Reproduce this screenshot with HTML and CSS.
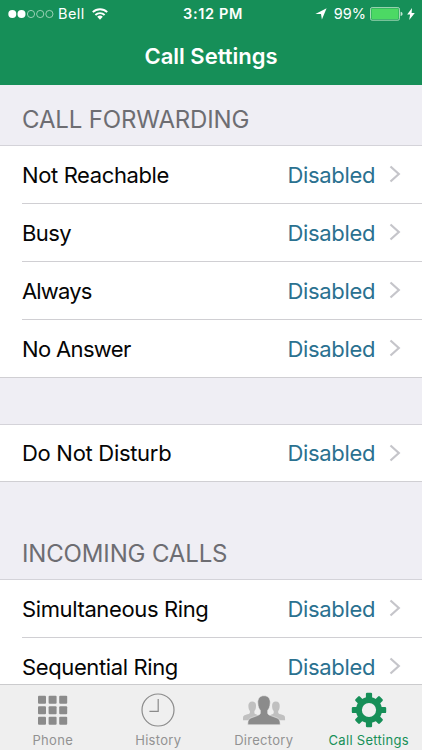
FILE: index.html
```html
<!DOCTYPE html>
<html lang="en">
<head>
<meta charset="utf-8">
<title>Call Settings</title>
<link rel="stylesheet" href="styles.css">
</head>
<body>
<div class="screen">
  <header class="top">
    <div class="status">
      <div class="status-left">
        <svg class="signal" width="46" height="10" viewBox="0 0 46 10"><g fill="#fff"><circle cx="4.3" cy="5" r="4"/><circle cx="13.5" cy="5" r="4"/></g><g fill="none" stroke="#b9dfcb" stroke-width=".8"><circle cx="23" cy="5" r="3.6"/><circle cx="32.2" cy="5" r="3.6"/><circle cx="41.4" cy="5" r="3.6"/></g></svg>
        <span class="carrier">Bell</span>
        <svg class="wifi" width="16" height="12" viewBox="0 0 16 12"><g fill="none" stroke="#fff" stroke-width="1.9"><path d="M.8 4.2a10.2 10.2 0 0 1 14.4 0"/><path d="M3.4 7a6.5 6.5 0 0 1 9.2 0"/></g><path d="M5.2 8.8a4 4 0 0 1 5.6 0L8 11.7z" fill="#fff"/></svg>
      </div>
      <span class="time">3:12 PM</span>
      <div class="status-right">
        <svg class="location" width="12" height="12" viewBox="0 0 12 12"><path d="M11.6.3 6.9 11.5 6 6H.4z" fill="#fff"/></svg>
        <span class="percent">99%</span>
        <svg class="battery" width="33" height="14" viewBox="0 0 33 14"><rect x=".5" y=".6" width="29" height="12.6" rx="1.6" fill="none" stroke="#a5dab8"/><rect x="1.4" y="1.5" width="27.2" height="10.8" rx=".8" fill="#4cd964"/><path d="M30.6 4.8c2.6.3 2.6 4 0 4.2z" fill="#c3e5d2"/></svg>
        <svg class="bolt" width="8" height="12" viewBox="0 0 8 12"><path d="M5 0 .2 6.6h2.9L2.2 12l5.600-7H4.600z" fill="#fff"/></svg>
      </div>
    </div>
    <h1 class="title">Call Settings</h1>
  </header>
  <main class="content">
    <h2 class="group-title forwarding">CALL FORWARDING</h2>
    <ul class="group">
      <li class="row"><span class="label reachable">Not Reachable</span><span class="value">Disabled</span><svg class="chevron" width="12" height="18" viewBox="0 0 12 18"><path d="M1.500 1.500 9.800 9l-8.300 7.500"/></svg></li>
      <li class="row"><span class="label busy">Busy</span><span class="value">Disabled</span><svg class="chevron" width="12" height="18" viewBox="0 0 12 18"><path d="M1.5 1.5 9.8 9l-8.3 7.5"/></svg></li>
      <li class="row"><span class="label always">Always</span><span class="value">Disabled</span><svg class="chevron" width="12" height="18" viewBox="0 0 12 18"><path d="M1.5 1.5 9.8 9l-8.3 7.5"/></svg></li>
      <li class="row"><span class="label answer">No Answer</span><span class="value">Disabled</span><svg class="chevron" width="12" height="18" viewBox="0 0 12 18"><path d="M1.5 1.5 9.8 9l-8.3 7.5"/></svg></li>
    </ul>
    <ul class="group separate">
      <li class="row"><span class="label disturb">Do Not Disturb</span><span class="value">Disabled</span><svg class="chevron" width="12" height="18" viewBox="0 0 12 18"><path d="M1.5 1.5 9.8 9l-8.3 7.5"/></svg></li>
    </ul>
    <h2 class="group-title incoming">INCOMING CALLS</h2>
    <ul class="group">
      <li class="row"><span class="label simultaneous">Simultaneous Ring</span><span class="value">Disabled</span><svg class="chevron" width="12" height="18" viewBox="0 0 12 18"><path d="M1.5 1.5 9.8 9l-8.3 7.5"/></svg></li>
      <li class="row"><span class="label sequential">Sequential Ring</span><span class="value">Disabled</span><svg class="chevron" width="12" height="18" viewBox="0 0 12 18"><path d="M1.5 1.5 9.8 9l-8.3 7.5"/></svg></li>
    </ul>
  </main>
  <nav class="tabs">
    <a class="tab"><svg width="44" height="36" viewBox="0 0 44 36"><g fill="#8b8b8b"><rect x="7" y="3.8" width="8" height="8" rx="1"/><rect x="17.6" y="3.8" width="8" height="8" rx="1"/><rect x="28.2" y="3.8" width="8" height="8" rx="1"/><rect x="7" y="14.3" width="8" height="8" rx="1"/><rect x="17.6" y="14.3" width="8" height="8" rx="1"/><rect x="28.2" y="14.3" width="8" height="8" rx="1"/><rect x="7" y="24.8" width="8" height="8" rx="1"/><rect x="17.6" y="24.8" width="8" height="8" rx="1"/><rect x="28.2" y="24.8" width="8" height="8" rx="1"/></g></svg><span class="tab-label">Phone</span></a>
    <a class="tab"><svg width="44" height="36" viewBox="0 0 44 36"><g fill="none" stroke="#8b8b8b" stroke-width="1.2"><circle cx="22" cy="18" r="16"/><path d="M22.2 7v12.400h-8.800"/></g></svg><span class="tab-label">History</span></a>
    <a class="tab"><svg width="44" height="36" viewBox="0 0 44 36"><g fill="#c0c0c0"><path d="M10.200 9.500c2.700 0 4 2 3.800 4.700-.1 2.500-.7 3.800-1.600 4.800v2c0 1.500 5.200 1.800 5.200 4v3.200H1c0-3.900.2-4.600 2.300-5.200 3.200-.9 4.600-1 4.600-2.400V19c-.8-1-1.400-2.300-1.500-4.800-.2-2.700 1.200-4.700 3.800-4.700z"/><path d="M33.900 9.500c-2.700 0-4 2-3.800 4.700.1 2.500.7 3.800 1.600 4.800v2c0 1.500-5.200 1.800-5.200 4v3.200h16.600c0-3.900-.2-4.600-2.300-5.200-3.200-.9-4.600-1-4.600-2.400V19c.8-1 1.400-2.300 1.500-4.800.2-2.700-1.200-4.700-3.800-4.700z"/></g><path d="M22 3.700c4.300 0 6.500 3.100 6.200 7.300-.2 3.500-1 5.700-2.500 7.300v2.800c0 1.900 3.100 2.500 6.500 3.800 4.500 1.600 6 1.700 6 7.900H5.800c0-6.200 1.500-6.300 6-7.900 3.400-1.300 6.500-1.900 6.500-3.800v-2.800c-1.500-1.600-2.300-3.800-2.500-7.300-.3-4.200 1.900-7.300 6.200-7.300z" fill="#8b8b8b" stroke="#efefef" stroke-width=".6"/></svg><span class="tab-label">Directory</span></a>
    <a class="tab active"><svg width="44" height="36" viewBox="0 0 44 36"><g fill="#168f58"><rect x="18.9" y=".8" width="6.2" height="34.4" rx="1.2"/><rect x="4.8" y="14.9" width="34.4" height="6.2" rx="1.2"/><rect x="18.9" y=".8" width="6.2" height="34.4" rx="1.2" transform="rotate(45 22 18)"/><rect x="18.9" y=".8" width="6.2" height="34.4" rx="1.2" transform="rotate(-45 22 18)"/><circle cx="22" cy="18" r="13"/></g><circle cx="22" cy="18" r="7.1" fill="#efefef"/></svg><span class="tab-label">Call Settings</span></a>
  </nav>
</div>
</body>
</html>
```
FILE: styles.css
```css
* { box-sizing: border-box; }

body {
  margin: 0;
  font-family: Inter, "Liberation Sans", sans-serif;
  background: #efeef4;
}

.screen {
  display: flex;
  flex-direction: column;
  width: 422px;
  height: 750px;
  overflow: hidden;
}

.top {
  flex: none;
  height: 85px;
  background: #168f58;
  color: #fff;
}

.status {
  display: grid;
  grid-template-columns: 1fr auto 1fr;
  align-items: center;
  height: 28px;
  padding: 0 7px 0 8px;
  font-size: 14px;
  line-height: 28px;
}

.status-left, .status-right { display: flex; align-items: center; }
.status-right { justify-content: flex-end; }
.carrier { width: 34px; margin-left: 4px; font-size: 14.5px; letter-spacing: 0.4px; }
.wifi { margin-top: -1px; }
.time { margin-left: 3px; font-size: 14.5px; font-weight: 600; letter-spacing: 0.65px; }
.percent { margin: 0 4px 0 7px; font-size: 14.5px; }
.bolt { margin-left: 4px; }

.title {
  margin: 0;
  font-size: 22px;
  font-weight: 600;
  line-height: 56px;
  text-align: center;
}

.content {
  flex: 1;
  min-height: 0;
  overflow: hidden;
}

.group-title {
  height: 61px;
  margin: 0;
  padding: 4px 22px 0;
  border-bottom: 1px solid #d4d3d9;
  color: #6d6d72;
  font-size: 24px;
  font-weight: 400;
  line-height: 61px;
  letter-spacing: -0.15px;
}

.incoming { height: 98px; padding-top: 41px; }

.group {
  margin: 0;
  padding: 0;
  list-style: none;
  background: #fff;
}

.separate { margin-top: 46px; border-top: 1px solid #d4d3d9; }
.separate .row { height: 57px; }

.row {
  display: flex;
  align-items: center;
  height: 58px;
  margin-left: 22px;
  padding-right: 21px;
  border-bottom: 1px solid #d0cfd3;
  font-size: 22px;
  line-height: 30px;
}

.row:last-child {
  margin-left: 0;
  padding-left: 22px;
}

.label { flex: 1; color: #050505; letter-spacing: -0.38px; white-space: nowrap; }
.busy { letter-spacing: -0.6px; }
.always { letter-spacing: -0.85px; }
.answer { letter-spacing: -0.65px; }
.disturb { letter-spacing: -0.3px; }
.value { color: #2a7190; letter-spacing: -0.35px; }
.chevron { margin: -1px 0 0 14px; fill: none; stroke: #c5c5ca; stroke-width: 2.2; }

.tabs {
  display: grid;
  grid-template-columns: repeat(4, 1fr);
  flex: none;
  height: 66px;
  border-top: 1px solid #cbcbcd;
  background: #efefef;
}

.tab {
  display: flex;
  flex-direction: column;
  align-items: center;
  padding-top: 7px;
  color: #929292;
}

.tab svg { flex: none; }

.tab-label {
  margin-top: 4px;
  font-size: 13px;
  line-height: 16px;
  letter-spacing: 0.3px;
  white-space: nowrap;
}

.active { padding-right: 1px; color: #168f58; }
```
